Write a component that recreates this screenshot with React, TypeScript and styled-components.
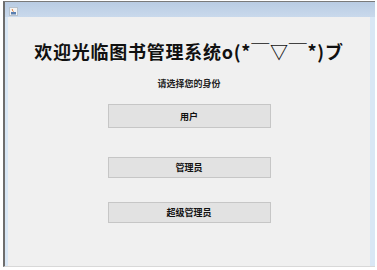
import React from "react";
import styled, { createGlobalStyle } from "styled-components";

const Global = createGlobalStyle`
  html, body { margin: 0; padding: 0; background: #ffffff; }
  body { width: 377px; height: 270px; overflow: hidden; font-family: "Noto Sans CJK SC", "Liberation Sans", sans-serif; }
`;

const Window = styled.div`
  margin: 1px 0 0 3px;
  width: 372px;
  height: 266px;
  border-top: 1px solid #7a7a7a;
  border-left: 2px solid #6e6e6e;
  border-bottom: 1px solid #d8d8d8;
  box-sizing: border-box;
  display: flex;
  flex-direction: column;
  background: #c8d9ec;
`;

const TitleBar = styled.div`
  height: 15px;
  flex: none;
  display: flex;
  align-items: center;
  padding-left: 4px;
  background: linear-gradient(#b9cce3, #c9d9ec);
`;

const Icon = styled.svg`
  width: 9px;
  height: 9px;
  margin-top: 3px;
`;

const Body = styled.div`
  flex: 1;
  display: flex;
  background: #d9e7f5;
  padding: 0 5px 0 3px;
`;

const Panel = styled.div`
  flex: 1;
  background: #f0f0f0;
  display: flex;
  flex-direction: column;
  align-items: center;
`;

const Heading = styled.h1`
  margin: 24px 0 0 0;
  font-size: 18px;
  line-height: 20px;
  font-weight: 700;
  color: #111;
  white-space: nowrap;
  letter-spacing: 0.75px;
`;

const Sub = styled.div`
  margin-top: 17px;
  font-size: 9px;
  line-height: 12px;
  font-weight: 700;
  color: #222;
`;

const RoleButton = styled.button<{ $gap: number; $h: number }>`
  margin-top: ${(p) => p.$gap}px;
  width: 163px;
  height: ${(p) => p.$h}px;
  border: 1px solid #c6c6c6;
  background: #e2e2e2;
  font-family: "Noto Sans CJK SC", sans-serif;
  font-size: 9px;
  font-weight: 700;
  color: #111;
  padding: 0;
  display: flex;
  align-items: center;
  justify-content: center;
`;

export default function App() {
  return (
    <>
      <Global />
      <Window>
        <TitleBar>
          <Icon viewBox="0 0 9 9">
            <rect x="0.5" y="0.5" width="8" height="8" fill="#f4f4f4" stroke="#b8c2cc" />
            <path d="M3 2 C4 3 3 4 4.5 4.5" stroke="#e07020" fill="none" strokeWidth="1" />
            <rect x="2" y="5" width="5" height="2.5" fill="#5a7fb0" />
          </Icon>
        </TitleBar>
        <Body>
          <Panel>
            <Heading>欢迎光临图书管理系统o(*￣▽￣*)ブ</Heading>
            <Sub>请选择您的身份</Sub>
            <RoleButton $gap={14} $h={24}>用户</RoleButton>
            <RoleButton $gap={29} $h={21}>管理员</RoleButton>
            <RoleButton $gap={24} $h={21}>超级管理员</RoleButton>
          </Panel>
        </Body>
      </Window>
    </>
  );
}
